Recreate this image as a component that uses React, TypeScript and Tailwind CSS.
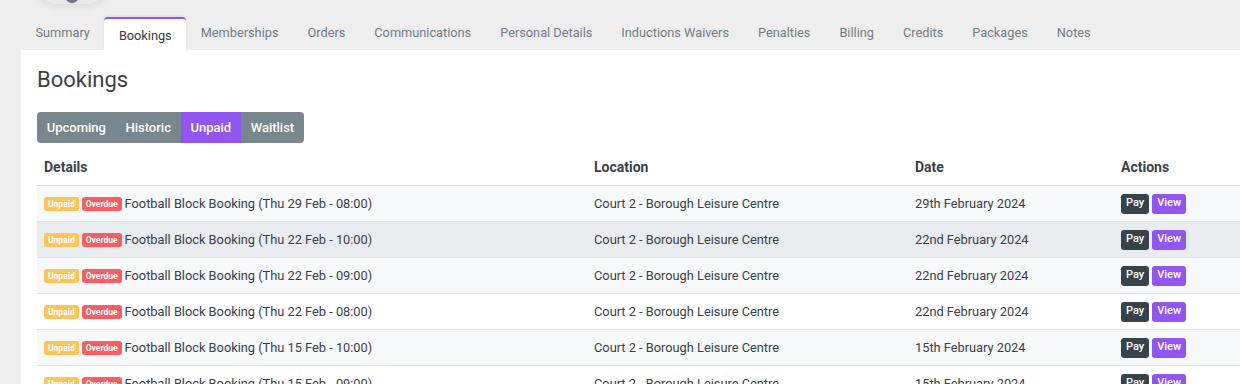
import React from "react";

const TABS = [
  "Summary",
  "Bookings",
  "Memberships",
  "Orders",
  "Communications",
  "Personal Details",
  "Inductions Waivers",
  "Penalties",
  "Billing",
  "Credits",
  "Packages",
  "Notes",
];

const FILTERS = ["Upcoming", "Historic", "Unpaid", "Waitlist"];

const ROWS = [
  { slot: "Thu 29 Feb - 08:00", date: "29th February 2024" },
  { slot: "Thu 22 Feb - 10:00", date: "22nd February 2024" },
  { slot: "Thu 22 Feb - 09:00", date: "22nd February 2024" },
  { slot: "Thu 22 Feb - 08:00", date: "22nd February 2024" },
  { slot: "Thu 15 Feb - 10:00", date: "15th February 2024" },
  { slot: "Thu 15 Feb - 09:00", date: "15th February 2024" },
];

function rowBg(i: number) {
  if (i === 1) return "bg-[#e9ecef]"; // hovered row
  return i % 2 === 0 ? "bg-[#f7f8fa]" : "bg-white";
}

export default function App() {
  return (
    <div className="h-[384px] w-[1240px] overflow-hidden bg-[#eeeeee] font-['Roboto',sans-serif] text-[#3a4148]">
      {/* avatar peeking from the header above */}
      <div className="relative h-0">
        <div className="absolute left-[36px] top-[-40px] h-[44px] w-[72px] rounded-full bg-[#e9e9e9] shadow-[0_2px_8px_rgba(0,0,0,0.10)]" />
        <div className="absolute left-[65px] top-[-11px] h-[14px] w-[14px] rounded-full bg-[#6c7780]" />
      </div>

      {/* tabs */}
      <div className="flex pl-[21px] pt-[17px]">
        {TABS.map((t) => {
          const active = t === "Bookings";
          return (
            <div
              key={t}
              className={
                active
                  ? "flex h-[33px] items-center rounded-t-[4px] border-t-2 border-[#9155f2] bg-white px-[14.5px] pt-[2px] text-[12.75px] text-[#343a40] shadow-[0_-1px_3px_rgba(0,0,0,0.08)]"
                  : "flex h-[33px] items-center px-[14.5px] pb-[1px] text-[12.75px] text-[#6e7c87]"
              }
            >
              {t}
            </div>
          );
        })}
      </div>

      {/* panel */}
      <div className="ml-[21px] bg-white pl-[16px] pt-[15px]">
        <h1 className="text-[22px] leading-[30px] text-[#3a4148]">Bookings</h1>

        <div className="mt-[17px] flex h-[31px] w-fit overflow-hidden rounded-[4px] bg-[#78868d]">
          {FILTERS.map((f) => (
            <div
              key={f}
              className={`flex items-center px-[9.75px] text-[13px] font-medium text-white ${
                f === "Unpaid" ? "bg-[#9155f2]" : ""
              }`}
            >
              {f}
            </div>
          ))}
        </div>

        <div className="mt-[6px]">
          <div className="grid h-[37px] grid-cols-[550px_321px_206px_1fr] items-center border-b border-[#d5dbe1] pl-[7px] text-[14px] font-bold text-[#3a4148]">
            <div>Details</div>
            <div>Location</div>
            <div>Date</div>
            <div>Actions</div>
          </div>
          {ROWS.map((r, i) => (
            <div
              key={i}
              className={`grid h-[36px] grid-cols-[550px_321px_206px_1fr] items-center border-b border-[#dfe3e8] pl-[7px] text-[12.8px] text-[#3a4148] ${rowBg(i)}`}
            >
              <div className="flex items-center">
                <span className="mr-[3px] rounded-[3px] bg-[#ffc454] px-[4px] py-[1px] text-[8.5px] font-bold leading-[12px] text-white">
                  Unpaid
                </span>
                <span className="mr-[3px] rounded-[3px] bg-[#ff5c62] px-[4px] py-[1px] text-[8.5px] font-bold leading-[12px] text-white">
                  Overdue
                </span>
                <span>Football Block Booking ({r.slot})</span>
              </div>
              <div>Court 2 - Borough Leisure Centre</div>
              <div>{r.date}</div>
              <div className="flex gap-[3px]">
                <span className="flex h-[20px] items-center rounded-[3px] bg-[#36434a] px-[5px] text-[11px] font-medium text-white">
                  Pay
                </span>
                <span className="flex h-[20px] items-center rounded-[3px] bg-[#9155f2] px-[5px] text-[11px] font-medium text-white">
                  View
                </span>
              </div>
            </div>
          ))}
        </div>
      </div>
    </div>
  );
}
